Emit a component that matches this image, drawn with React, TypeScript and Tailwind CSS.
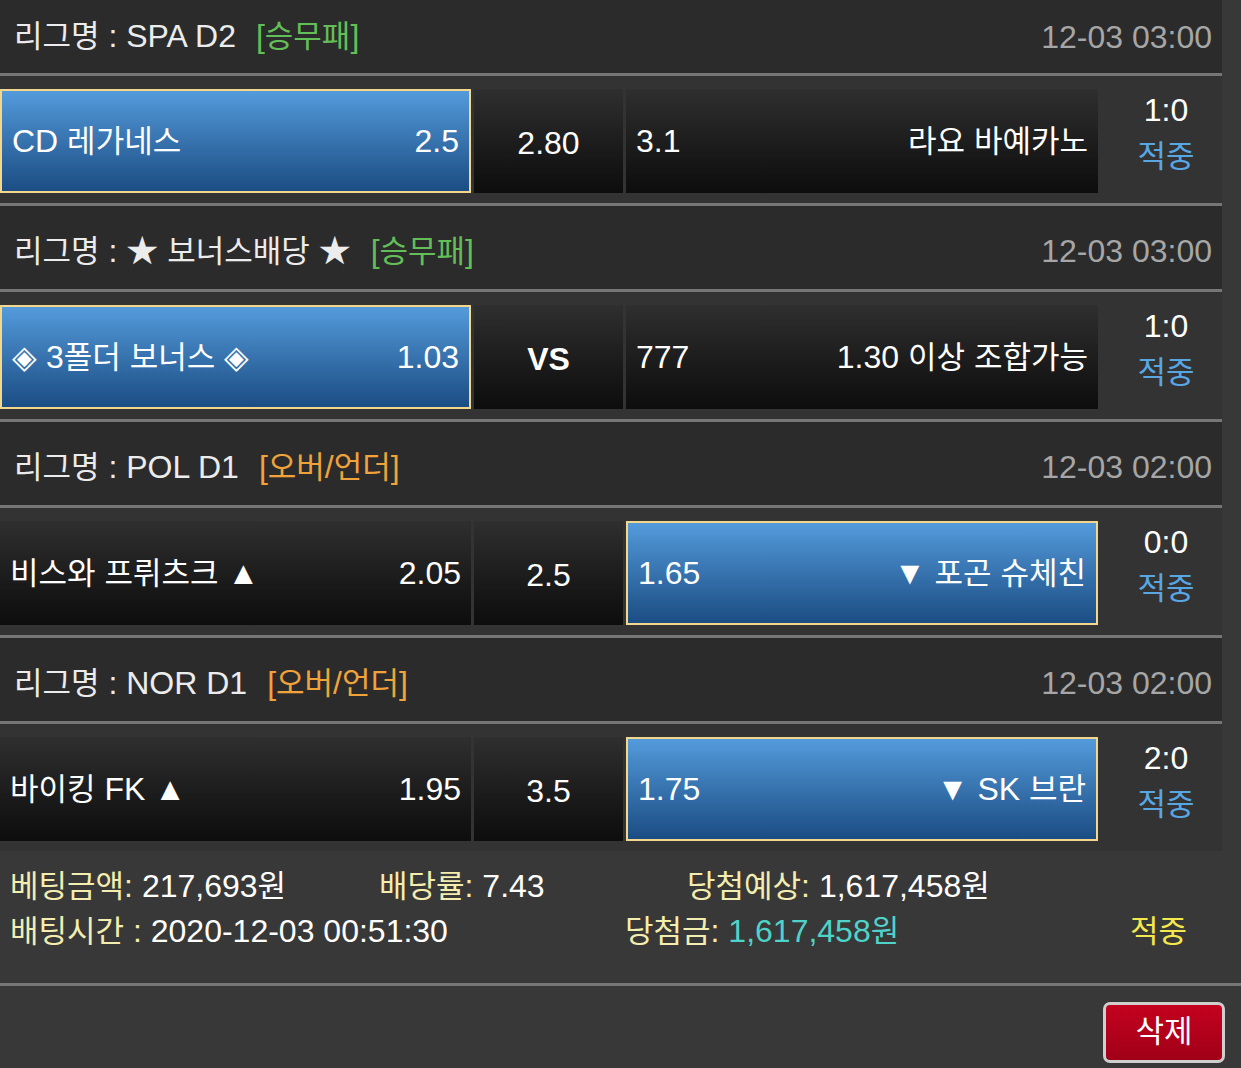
import { Fragment } from 'react';

type Row = {
  league: string;
  tag: string;
  tagClass: string;
  date: string;
  home: string;
  homeOdd: string;
  mid: string;
  midBold?: boolean;
  awayOdd: string;
  away: string;
  pick: 'home' | 'away';
  score: string;
};

const rows: Row[] = [
  {
    league: 'SPA D2',
    tag: '[승무패]',
    tagClass: 'text-[#63be58]',
    date: '12-03 03:00',
    home: 'CD 레가네스',
    homeOdd: '2.5',
    mid: '2.80',
    awayOdd: '3.1',
    away: '라요 바예카노',
    pick: 'home',
    score: '1:0',
  },
  {
    league: '★ 보너스배당 ★',
    tag: '[승무패]',
    tagClass: 'text-[#63be58]',
    date: '12-03 03:00',
    home: '◈ 3폴더 보너스 ◈',
    homeOdd: '1.03',
    mid: 'VS',
    midBold: true,
    awayOdd: '777',
    away: '1.30 이상 조합가능',
    pick: 'home',
    score: '1:0',
  },
  {
    league: 'POL D1',
    tag: '[오버/언더]',
    tagClass: 'text-[#f0a33a]',
    date: '12-03 02:00',
    home: '비스와 프뤼츠크 ▲',
    homeOdd: '2.05',
    mid: '2.5',
    awayOdd: '1.65',
    away: '▼ 포곤 슈체친',
    pick: 'away',
    score: '0:0',
  },
  {
    league: 'NOR D1',
    tag: '[오버/언더]',
    tagClass: 'text-[#f0a33a]',
    date: '12-03 02:00',
    home: '바이킹 FK ▲',
    homeOdd: '1.95',
    mid: '3.5',
    awayOdd: '1.75',
    away: '▼ SK 브란',
    pick: 'away',
    score: '2:0',
  },
];

// hangul from the CJK font runs wide, so its runs get their own size
function Ko({ text }: { text: string }) {
  const parts = text.split(/([가-힣]+)/);
  return (
    <>
      {parts.map((p, i) =>
        /[가-힣]/.test(p) ? (
          <span key={i} className="text-[31px]">
            {p}
          </span>
        ) : (
          <Fragment key={i}>{p}</Fragment>
        ),
      )}
    </>
  );
}

function Side({ name, odd, selected, away }: { name: string; odd: string; selected: boolean; away?: boolean }) {
  const cls = selected
    ? 'border-2 border-[#f3d78d] bg-linear-to-b from-[#549bdc] to-[#1b4d83] px-[10px]'
    : 'bg-linear-to-b from-[#2f2f2f] to-[#0d0d0d] px-[10px]';
  return (
    <div className={`flex h-[104px] items-center justify-between whitespace-nowrap text-white ${away ? 'w-[472px]' : 'w-[471px]'} ${cls}`}>
      {away ? (
        <>
          <span>{odd}</span>
          <span>
            <Ko text={name} />
          </span>
        </>
      ) : (
        <>
          <span>
            <Ko text={name} />
          </span>
          <span>{odd}</span>
        </>
      )}
    </div>
  );
}

export default function App() {
  return (
    <div className="min-h-[1068px] overflow-hidden bg-[#383838] font-['Liberation_Sans','Noto_Sans_CJK_KR',sans-serif] text-[32px]">
      <div className="w-[1222px]">
        {rows.map((r, i) => (
          <div key={i}>
            {/* league header */}
            <div
              className={`flex items-center justify-between border-b-[3px] border-[#767676] bg-[#2b2b2b] pr-[10px] pl-[14px] ${
                i === 0 ? 'h-[76px]' : 'h-[86px] pt-[7px]'
              }`}
            >
              <div className="whitespace-nowrap text-[#ececec]">
                <Ko text={`리그명 : ${r.league}`} />
                <span className={`ml-[20px] ${r.tagClass}`}>
                  <Ko text={r.tag} />
                </span>
              </div>
              <div className="text-[#a6a6a6]">{r.date}</div>
            </div>

            {/* match */}
            <div
              className={`flex bg-[#333333] pt-[13px] pb-[10px] ${
                i < rows.length - 1 ? 'border-b-[3px] border-[#767676]' : ''
              }`}
            >
              <Side name={r.home} odd={r.homeOdd} selected={r.pick === 'home'} />
              <div
                className={`ml-[3px] flex h-[104px] w-[149px] items-center justify-center bg-linear-to-b from-[#2f2f2f] to-[#0d0d0d] pt-[4px] text-white ${
                  r.midBold ? 'font-bold' : ''
                }`}
              >
                {r.mid}
              </div>
              <div className="ml-[3px]">
                <Side name={r.away} odd={r.awayOdd} selected={r.pick === 'away'} away />
              </div>
              <div className="flex h-[104px] flex-1 flex-col items-center pl-[12px]">
                <div className="h-[42px] leading-[42px] text-white">{r.score}</div>
                <div className="h-[50px] leading-[50px] text-[#58a7e4]">
                  <Ko text="적중" />
                </div>
              </div>
            </div>
          </div>
        ))}
      </div>

      {/* bet summary */}
      <div className="border-b-[3px] border-[#767676] pt-[13px] pb-[29px] pl-[10px] leading-[45px] whitespace-nowrap">
        <div className="flex">
          <div className="w-[369px]">
            <span className="text-[#f4edb0]">
              <Ko text="베팅금액:" />
            </span>
            <span className="text-white">
              {' '}
              <Ko text="217,693원" />
            </span>
          </div>
          <div className="w-[308px]">
            <span className="text-[#f4edb0]">
              <Ko text="배당률:" />
            </span>
            <span className="text-white"> 7.43</span>
          </div>
          <div>
            <span className="text-[#f4edb0]">
              <Ko text="당첨예상:" />
            </span>
            <span className="text-white">
              {' '}
              <Ko text="1,617,458원" />
            </span>
          </div>
        </div>
        <div className="flex">
          <div className="w-[615px]">
            <span className="text-[#f4edb0]">
              <Ko text="배팅시간 :" />
            </span>
            <span className="text-white"> 2020-12-03 00:51:30</span>
          </div>
          <div className="w-[505px]">
            <span className="text-[#f4edb0]">
              <Ko text="당첨금:" />
            </span>
            <span className="text-[#4fd3c9]">
              {' '}
              <Ko text="1,617,458원" />
            </span>
          </div>
          <div className="text-[#f4e84c]">
            <Ko text="적중" />
          </div>
        </div>
      </div>

      <div className="flex justify-end pt-[16px] pr-[16px]">
        <button className="flex h-[61px] w-[122px] items-center justify-center rounded-[7px] border-[3px] border-[#cfcfcf] bg-linear-to-b from-[#c4021f] to-[#a10018] text-white">
          <Ko text="삭제" />
        </button>
      </div>
    </div>
  );
}
